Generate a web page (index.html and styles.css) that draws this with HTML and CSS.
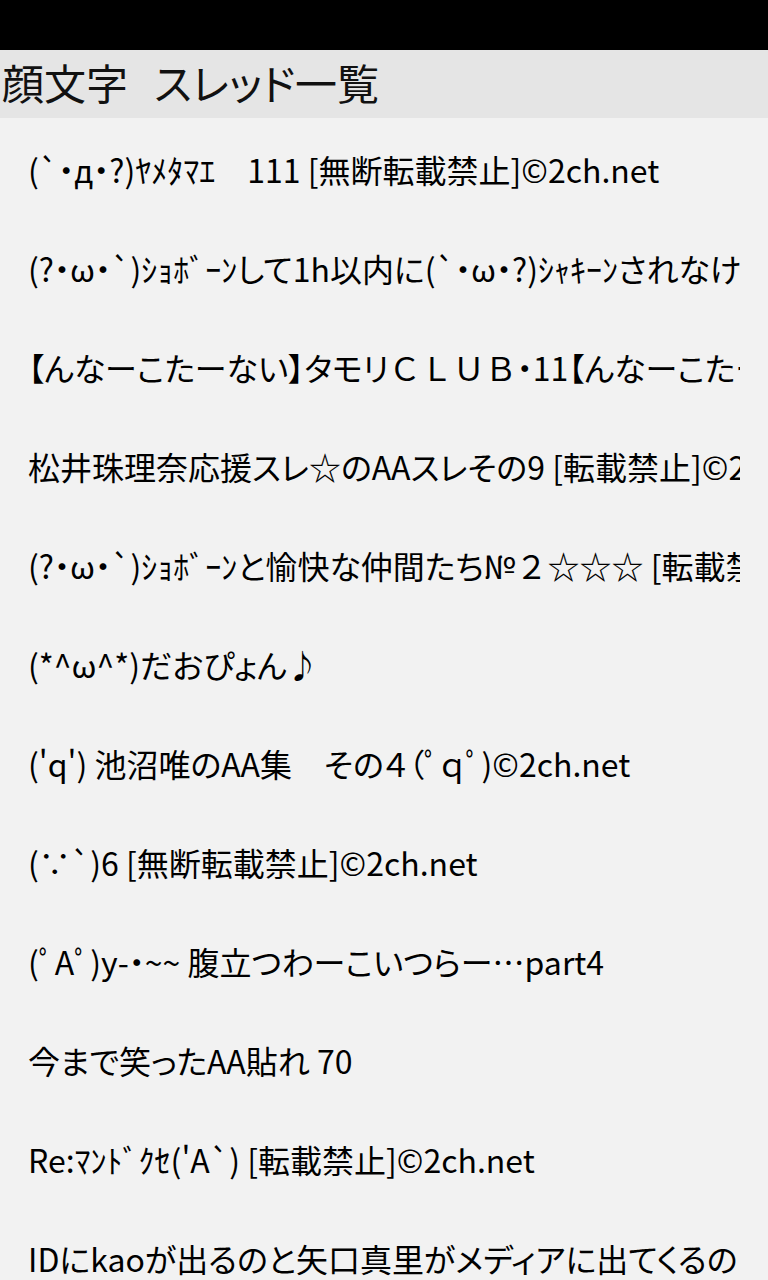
FILE: index.html
```html
<!DOCTYPE html>
<html lang="ja">
<head>
<meta charset="utf-8">
<link rel="stylesheet" href="styles.css">
</head>
<body>
<div class="status"></div>
<header class="title"><span class="app">顔文字</span><span class="page">スレッド一覧</span></header>
<ul class="threads">
<li><span>(`・д・?)ﾔﾒﾀﾏｴ　111 [無断転載禁止]©2ch.net</span></li>
<li><span>(?・ω・`)ｼｮﾎﾞｰﾝして1h以内に(`・ω・?)ｼｬｷｰﾝされなければ[転載禁止]©2ch.net</span></li>
<li><span>【んなーこたーない】タモリ<span class="wide">ＣＬＵＢ</span>・11【んなーこたーない】</span></li>
<li><span>松井珠理奈応援スレ☆のAAスレその9 [転載禁止]©2ch.net</span></li>
<li><span>(?・ω・`)ｼｮﾎﾞｰﾝと愉快な仲間たち№<span class="wide">２☆☆☆</span> [転載禁止]©2ch.net</span></li>
<li><span>(*^ω^*)だおぴょん♪</span></li>
<li><span>('q') 池沼唯のAA集　その４（ﾟｑﾟ)©2ch.net</span></li>
<li><span>(∵`)6 [無断転載禁止]©2ch.net</span></li>
<li><span>(ﾟAﾟ)y-・~~ 腹立つわーこいつらー…part4</span></li>
<li><span>今まで笑ったAA貼れ 70</span></li>
<li><span>Re:ﾏﾝﾄﾞｸｾ('A`) [転載禁止]©2ch.net</span></li>
<li><span>IDにkaoが出るのと矢口真里がメディアに出てくるのはどっちが早い？</span></li>
</ul>
</body>
</html>
```
FILE: styles.css
```css
html, body {
  margin: 0;
  padding: 0;
  height: 1280px;
  overflow: hidden;
  background: #f2f2f2;
  font-family: "Noto Sans CJK JP", "Noto Sans", sans-serif;
  color: #000;
}
.status {
  height: 50px;
  background: #000;
}
.title {
  height: 68px;
  background: #e5e5e5;
  font-size: 42px;
  line-height: 64px;
  padding-left: 2px;
  color: #111;
  white-space: nowrap;
  display: flex;
  gap: 26px;
  font-feature-settings: "palt";
}
.threads {
  list-style: none;
  margin: 0;
  padding: 0 28px;
}
.threads li {
  height: 99px;
  display: flex;
  align-items: center;
  white-space: nowrap;
  overflow: hidden;
  font-size: 32px;
  font-feature-settings: "palt";
}
.threads li:first-child {
  margin-top: 1px;
}
.wide {
  font-feature-settings: normal;
}
```
